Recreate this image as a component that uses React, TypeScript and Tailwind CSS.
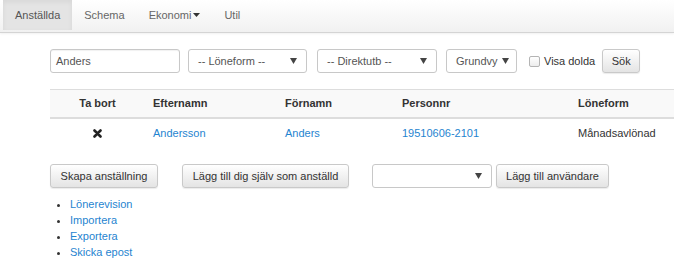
import React from "react";

const Caret = () => (
    <svg width="7" height="6" viewBox="0 0 7 6" className="shrink-0">
        <path d="M0 0h7L3.5 6z" fill="#444" />
    </svg>
);

const FakeSelect = ({ label, w, arrowPad = "pr-[9px]" }: { label: string; w: string; arrowPad?: string }) => {
    return (
        <div className={`${w} h-[24px] flex items-center justify-between pl-[9px] ${arrowPad} bg-white border border-[#c8c8c8] rounded-[3px] text-[#555]`}>
            <span>{label}</span>
            <Caret />
        </div>
    );
};

const Btn = ({ children, w }: { children: React.ReactNode; w: string }) => {
    return (
        <div className={`${w} h-[24px] flex items-center justify-center border border-[#c9c9c9] rounded-[3px] bg-gradient-to-b from-white to-[#e4e4e4] shadow-[0_1px_1px_rgba(0,0,0,0.08)] text-[#333]`}>
            {children}
        </div>
    );
};

export default function App() {
    const navItems = ["Schema", "Ekonomi", "Util"];

    const HeaderItem = ({ titulo, w, center }: { titulo: string; w: string; center?: boolean }) => {
        return <div className={`${w} shrink-0 ${center ? "text-center" : "pl-[8px]"} font-bold text-[#333]`}>{titulo}</div>;
    };

    return (
        <div className="w-[674px] h-[279px] overflow-hidden bg-white text-[11px] text-[#333]" style={{ fontFamily: '"Liberation Sans", Arial, sans-serif' }}>
            {/* navbar */}
            <div className="h-[33px] flex bg-gradient-to-b from-white to-[#f1f1f1] border-b border-[#d4d4d4] shadow-[0_1px_2px_rgba(0,0,0,0.06)]">
                <div className="ml-[3px] h-[30px] px-[12px] flex items-center bg-[#e4e4e4] shadow-[inset_0_2px_5px_rgba(0,0,0,0.06)] text-[#555]">Anställda</div>
                {navItems.map((item) => (
                    <div key={item} className="h-[30px] px-[12px] flex items-center text-[#666]">
                        {item}
                        {item === "Ekonomi" && (
                            <svg width="7" height="4" viewBox="0 0 7 4" className="ml-[2px]">
                                <path d="M0 0h7L3.5 4z" fill="#333" />
                            </svg>
                        )}
                    </div>
                ))}
            </div>

            {/* search row */}
            <div className="mt-[16px] ml-[50px] flex items-center">
                <div className="w-[130px] h-[24px] flex items-center pl-[5px] border border-[#c8c8c8] rounded-[3px] shadow-[inset_0_1px_1px_rgba(0,0,0,0.06)] text-[#555]">Anders</div>
                <div className="ml-[8px]">
                    <FakeSelect label="-- Löneform --" w="w-[119px]" />
                </div>
                <div className="ml-[10px]">
                    <FakeSelect label="-- Direktutb --" w="w-[120px]" />
                </div>
                <div className="ml-[9px]">
                    <FakeSelect label="Grundvy" w="w-[71px]" arrowPad="pr-[7px]" />
                </div>
                <div className="ml-[12px] w-[11px] h-[11px] border border-[#b4b4b4] rounded-[2px] bg-gradient-to-b from-white to-[#ededed]" />
                <span className="ml-[4px] text-[#333]">Visa dolda</span>
                <div className="ml-[7px]">
                    <Btn w="w-[38px]">Sök</Btn>
                </div>
            </div>

            {/* table */}
            <div className="mt-[16px] ml-[50px] w-[700px] border-t border-[#dddddd]">
                <div className="h-[29px] flex items-center bg-[#f9f9f9] border-b-2 border-[#dddddd]">
                    <HeaderItem titulo="Ta bort" w="w-[95px]" center />
                    <HeaderItem titulo="Efternamn" w="w-[132px]" />
                    <HeaderItem titulo="Förnamn" w="w-[117px]" />
                    <HeaderItem titulo="Personnr" w="w-[176px]" />
                    <HeaderItem titulo="Löneform" w="w-[150px]" />
                </div>
                <div className="h-[28px] flex items-center">
                    <div className="w-[95px] shrink-0 flex justify-center pr-[1px]">
                        <svg width="9" height="9" viewBox="0 0 9 9">
                            <path d="M1.5 1.5L7.5 7.5M7.5 1.5L1.5 7.5" stroke="#222" strokeWidth="2.6" strokeLinecap="round" />
                        </svg>
                    </div>
                    <div className="w-[132px] shrink-0 pl-[8px] text-[#1f84d0]">Andersson</div>
                    <div className="w-[117px] shrink-0 pl-[8px] text-[#1f84d0]">Anders</div>
                    <div className="w-[176px] shrink-0 pl-[8px] text-[#1f84d0]">19510606-2101</div>
                    <div className="w-[150px] shrink-0 pl-[8px]">Månadsavlönad</div>
                </div>
            </div>

            {/* actions */}
            <div className="mt-[17px] ml-[50px] flex items-center">
                <Btn w="w-[108px]">Skapa anställning</Btn>
                <div className="ml-[24px]">
                    <Btn w="w-[167px]">Lägg till dig själv som anställd</Btn>
                </div>
                <div className="ml-[23px]">
                    <FakeSelect label="" w="w-[120px]" />
                </div>
                <div className="ml-[4px]">
                    <Btn w="w-[113px]">Lägg till användare</Btn>
                </div>
            </div>

            {/* links */}
            <ul className="mt-[8px] ml-[70px] list-disc leading-[16px] text-[#1f84d0] marker:text-[#333]">
                <li>Lönerevision</li>
                <li>Importera</li>
                <li>Exportera</li>
                <li>Skicka epost</li>
            </ul>
        </div>
    );
}
